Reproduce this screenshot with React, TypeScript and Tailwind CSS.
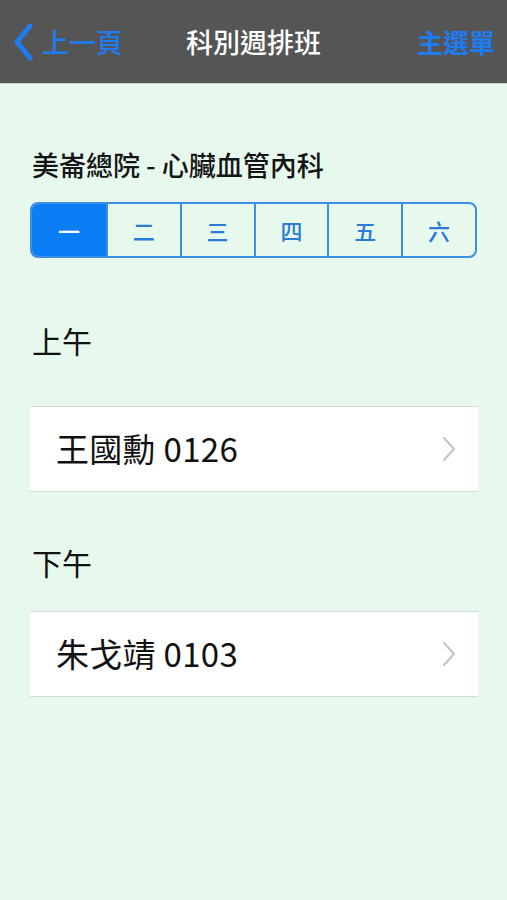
import { useState } from "react";

const font = '"Noto Sans CJK TC", "Noto Sans", sans-serif';
const days = ["一", "二", "三", "四", "五", "六"];

function Chevron() {
  return (
    <svg width="14" height="26" viewBox="0 0 14 26" fill="none">
      <path d="M2 2 L12 13 L2 24" stroke="#c5c5ca" strokeWidth="2.2" strokeLinecap="round" strokeLinejoin="round" />
    </svg>
  );
}

function DoctorRow({ name }: { name: string }) {
  return (
    <div className="h-[86px] flex items-center justify-between bg-white border-y border-[#d6d9d7] pl-[26px] pr-[22px]">
      <span className="text-[33px] text-[#111] tracking-[0.3px]">{name}</span>
      <Chevron />
    </div>
  );
}

export default function App() {
  const [day, setDay] = useState(0);

  return (
    <div className="w-[507px] h-[900px] bg-[#e7f9ed] flex flex-col" style={{ fontFamily: font }}>
      {/* nav bar */}
      <div className="h-[84px] bg-[#555555] border-b border-[#c9cfcb] flex items-center justify-between px-[12px] relative">
        <div className="flex items-center gap-[8px] text-[#1d7cf2]">
          <svg width="22" height="40" viewBox="0 0 22 40" fill="none">
            <path d="M18 4 L5 20 L18 36" stroke="#1d7cf2" strokeWidth="5" strokeLinecap="round" strokeLinejoin="round" />
          </svg>
          <span className="text-[27px] font-medium leading-none">上一頁</span>
        </div>
        <span className="absolute left-1/2 -translate-x-1/2 text-[27px] font-medium text-white leading-none">科別週排班</span>
        <span className="text-[26px] font-bold text-[#1d7cf2] leading-none">主選單</span>
      </div>

      <div className="pl-[30px] pr-[29px] flex flex-col">
        <div className="mt-[63px] pl-[2px] text-[27px] font-medium leading-[36px] text-[#151515]">美崙總院 - 心臟血管內科</div>

        <div className="mt-[19px] mr-[1px] h-[56px] grid grid-cols-6 border-2 border-[#3d8fe3] rounded-[8px] overflow-hidden">
          {days.map((d, i) => (
            <button
              key={d}
              onClick={() => setDay(i)}
              className={
                (i === day ? "bg-[#0b7ef5] text-white " : "text-[#2a7cd8] ") +
                (i > 0 ? "border-l-2 border-[#3d8fe3] " : "") +
                "text-[22px] font-medium flex items-center justify-center"
              }
            >
              {d}
            </button>
          ))}
        </div>

        <div className="mt-[62px] pl-[2px] text-[30px] leading-[40px] text-[#111]">上午</div>
        <div className="mt-[46px]">
          <DoctorRow name="王國勳 0126" />
        </div>

        <div className="mt-[50px] pl-[2px] text-[30px] leading-[40px] text-[#111]">下午</div>
        <div className="mt-[29px]">
          <DoctorRow name="朱戈靖 0103" />
        </div>
      </div>
    </div>
  );
}
